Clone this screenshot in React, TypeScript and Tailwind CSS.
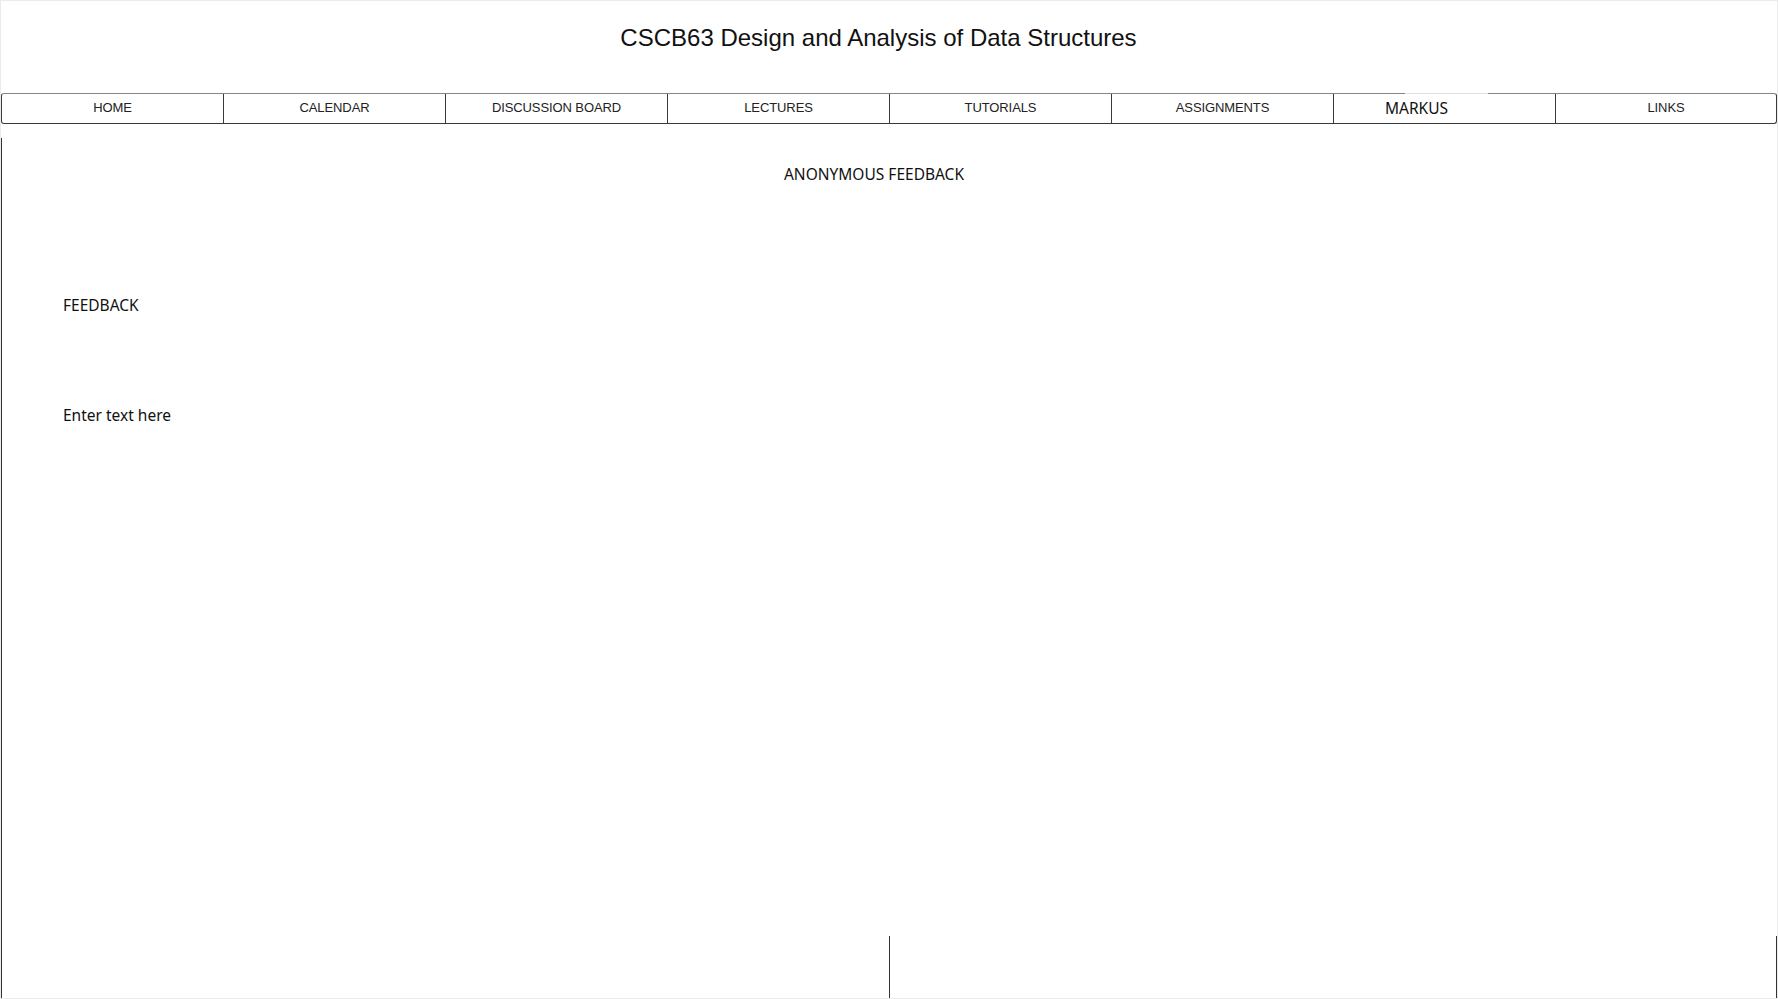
const tabs = [
  'HOME',
  'CALENDAR',
  'DISCUSSION BOARD',
  'LECTURES',
  'TUTORIALS',
  'ASSIGNMENTS',
  'MARKUS',
  'LINKS',
];

function NavBar() {
  return (
    <nav className="flex h-[31px] border border-[#3a3a3a] border-t-[#858585] rounded-[3px]">
      {tabs.map((tab, i) =>
        tab === 'MARKUS' ? (
          // markus tab uses another font and sits off-centre
          <div
            key={tab}
            className="relative flex w-[222px] items-center border-r border-[#3a3a3a] pl-[51px] pb-[2px]"
          >
            <span className="absolute -top-px left-[71px] h-px w-[83px] bg-[#e2e2e2]"></span>
            <span className="font-['Noto_Sans',sans-serif] text-[15.5px] leading-[20px] text-[#111]">
              {tab}
            </span>
          </div>
        ) : (
          <div
            key={tab}
            className={
              i === tabs.length - 1
                ? 'flex flex-1 items-center justify-center pb-[2px]'
                : 'flex w-[222px] items-center justify-center border-r border-[#3a3a3a] pb-[2px]'
            }
          >
            <span className="font-['Liberation_Sans',Arial,sans-serif] text-[13px] tracking-[-0.1px] text-[#222]">
              {tab}
            </span>
          </div>
        )
      )}
    </nav>
  );
}

export default function App() {
  return (
    <div className="flex h-[999px] w-[1778px] flex-col border border-[#ebebeb] bg-white">
      {/* titre */}
      <header className="h-[92px] pt-[23px] pr-[21px] text-center">
        <h1 className="font-['Liberation_Sans',Arial,sans-serif] text-[24px] leading-[28px] text-[#111]">
          CSCB63 Design and Analysis of Data Structures
        </h1>
      </header>

      <NavBar />

      {/* zone feedback */}
      <main className="mt-[14px] flex flex-1 flex-col border-l border-[#333] font-['Noto_Sans',sans-serif] text-[15.5px] leading-[20px] text-[#111]">
        <h2 className="pt-[26px] pr-[31px] text-center">ANONYMOUS FEEDBACK</h2>

        <div className="mt-[111px] pl-[61px]">FEEDBACK</div>
        <div className="mt-[90px] pl-[61px]">Enter text here</div>

        <div className="flex-1"></div>

        <div className="flex h-[62px]">
          <div className="w-[887px]"></div>
          <div className="flex-1 border-l border-r border-[#333]"></div>
        </div>
      </main>
    </div>
  );
}
